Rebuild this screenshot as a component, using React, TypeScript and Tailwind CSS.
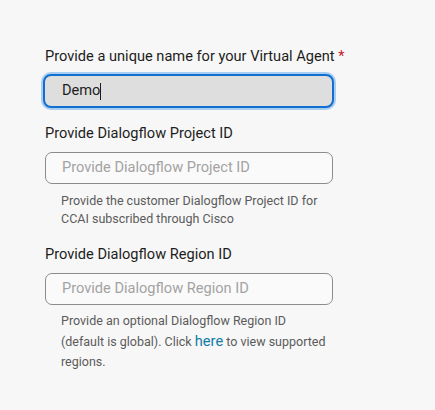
import React from "react";

export default function App() {
  return (
    <div className="w-[435px] h-[410px] bg-[#f7f7f7] overflow-hidden" style={{ fontFamily: 'Roboto, "Liberation Sans", Arial, sans-serif' }}>
      <div className="pl-[45px] pt-[47px] w-[380px]">
        <div className="whitespace-nowrap text-[14.6px] leading-[18px] text-[#1d1d1d]">
          Provide a unique name for your Virtual Agent <span className="text-[#c8202d]">*</span>
        </div>
        <div className="mt-[9px] -ml-[2px] w-[291px] h-[34px] rounded-[8px] border-2 border-[#1170cf] bg-[#dedede] shadow-[0_0_0_2px_#a9cdf0] flex items-center pl-[17px] text-[14.6px] text-[#1d1d1d]">
          Demo<span className="inline-block w-px h-[17px] bg-[#1d1d1d]" />
        </div>

        <div className="mt-[16px] whitespace-nowrap text-[14.6px] leading-[18px] text-[#1d1d1d]">Provide Dialogflow Project ID</div>
        <div className="mt-[10px] w-[288px] h-[32px] rounded-[7px] border border-[#8c8c8c] bg-[#fafafa] flex items-center pl-[16px] text-[14.6px] text-[#a3a3a3]">
          Provide Dialogflow Project ID
        </div>
        <div className="mt-[8px] pl-[16px] whitespace-nowrap text-[12.5px] leading-[18px] text-[#5b5b5b]">
          Provide the customer Dialogflow Project ID for<br />CCAI subscribed through Cisco
        </div>

        <div className="mt-[17px] whitespace-nowrap text-[14.6px] leading-[18px] text-[#1d1d1d]">Provide Dialogflow Region ID</div>
        <div className="mt-[10px] w-[288px] h-[32px] rounded-[7px] border border-[#8c8c8c] bg-[#fafafa] flex items-center pl-[16px] text-[14.6px] text-[#a3a3a3]">
          Provide Dialogflow Region ID
        </div>
        <div className="mt-[6px] pl-[16px] whitespace-nowrap text-[12.5px] leading-[20px] text-[#5b5b5b]">
          Provide an optional Dialogflow Region ID<br />(default is global). Click <span className="text-[14.6px] text-[#137ba8]">here</span> to view supported<br />regions.
        </div>
      </div>
    </div>
  );
}
